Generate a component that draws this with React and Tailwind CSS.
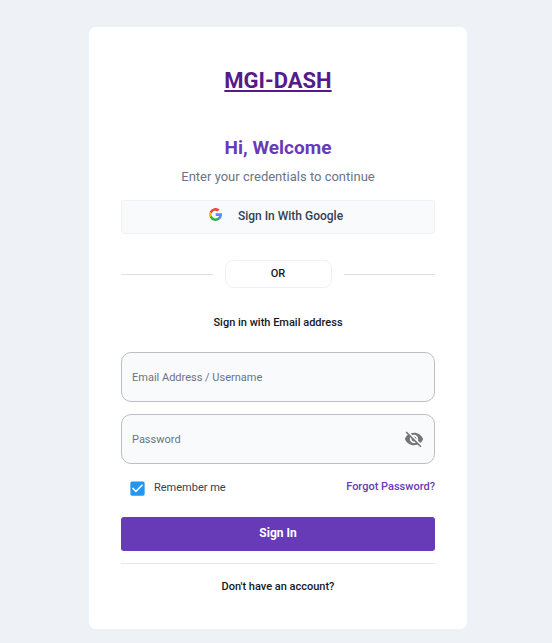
import { useState } from "react";
import { MdCheckBox, MdCheckBoxOutlineBlank, MdVisibility, MdVisibilityOff } from "react-icons/md";

function GoogleLogo() {
  return (
    <svg viewBox="0 0 48 48" className="mb-1 size-[13px]" aria-hidden="true">
      <path fill="#FBBB00" d="M10.6 29 8.9 35.2l-6 .1A23.9 23.9 0 0 1 2.7 13l5.4 1 2.4 5.3a14.3 14.3 0 0 0 .1 9.7z" />
      <path fill="#518EF8" d="M47.6 19.500a24 24 0 0 1-8.600 23.200l-6.800-.3-1-6a14.300 14.300 0 0 0 6.200-7.300H24.700v-9.600h22.900z" />
      <path fill="#28B446" d="M39 42.700A24 24 0 0 1 2.900 35.300l7.700-6.300a14.300 14.300 0 0 0 20.600 7.300l7.800 6.400z" />
      <path fill="#F14336" d="m39.300 5.500-7.800 6.400a14.300 14.300 0 0 0-21 7.400L2.700 13A24 24 0 0 1 39.300 5.500z" />
    </svg>
  );
}

export default function App() {
  const [remember, setRemember] = useState(true);
  const [visible, setVisible] = useState(false);

  return (
    <main className="flex min-h-screen justify-center bg-[#eef2f6] pt-[26px] pb-[13px] pl-1 font-['Roboto',sans-serif] text-[#121926]">
      <section className="flex w-full max-w-[380px] flex-col rounded-lg border border-[#eaf4fc] bg-white px-8 pt-10">
        <a href="#home" className="self-center text-[22px] leading-7 font-bold text-[#551a8b] underline">
          MGI-DASH
        </a>
        <h1 className="mt-[41px] text-center text-[19px] leading-6 font-bold text-[#673ab7]">Hi, Welcome</h1>
        <p className="mt-[7px] text-center text-[13px] leading-5 text-[#697586]">Enter your credentials to continue</p>

        <button
          type="button"
          className="mt-[13px] flex h-[34px] items-center justify-center gap-4 rounded-[3px] border border-[#eef2f6] bg-[#f8fafc] pr-1 pb-0.5 text-xs font-medium text-[#364152]"
        >
          <GoogleLogo />
          Sign In With Google
        </button>

        <div className="mt-[26px] flex items-center gap-3">
          <hr className="grow border-[#e0e0e0]" />
          <span className="w-[107px] rounded-lg border border-[#eef2f6] text-center text-[11px] leading-[26px] font-medium">
            OR
          </span>
          <hr className="grow border-[#e0e0e0]" />
        </div>

        <h2 className="mt-[27px] text-center text-[11px] leading-4 font-medium">Sign in with Email address</h2>

        <form className="mt-[21px] flex flex-col" onSubmit={(event) => event.preventDefault()}>
          <input
            type="text"
            aria-label="Email Address / Username"
            placeholder="Email Address / Username"
            className="h-[50px] rounded-[10px] border border-[#bdbec0] bg-[#f8fafc] px-[10px] text-[11px] placeholder:text-[#697586]"
          />
          <div className="mt-3 flex h-[50px] items-center rounded-[10px] border border-[#bdbec0] bg-[#f8fafc] px-[10px]">
            <input
              type={visible ? "text" : "password"}
              aria-label="Password"
              placeholder="Password"
              className="h-full min-w-0 grow bg-transparent text-[11px] outline-none placeholder:text-[#697586]"
            />
            <button
              type="button"
              aria-label="Toggle password visibility"
              onClick={() => setVisible(!visible)}
              className="text-[#757575]"
            >
              {visible ? <MdVisibility size={20} /> : <MdVisibilityOff size={20} />}
            </button>
          </div>

          <div className="mt-[13px] flex items-start justify-between text-[11px] leading-5">
            <label className="flex items-center gap-[7px] pl-[7px] leading-[22px] text-[#364152]">
              <input
                type="checkbox"
                checked={remember}
                onChange={(event) => setRemember(event.target.checked)}
                className="sr-only"
              />
              <span className="text-[#2196f3]">
                {remember ? <MdCheckBox size={19} /> : <MdCheckBoxOutlineBlank size={19} />}
              </span>
              Remember me
            </label>
            <a href="#forgot" className="font-medium text-[#673ab7]">
              Forgot Password?
            </a>
          </div>

          <button
            type="submit"
            className="mt-[18px] h-[34px] rounded-[3px] bg-[#673ab7] pb-0.5 text-xs font-bold text-white"
          >
            Sign In
          </button>
        </form>

        <hr className="mt-3 border-[#e3e8ef]" />
        <a href="#register" className="mt-[15px] mb-8 self-center text-[11px] leading-4 font-medium">
          Don't have an account?
        </a>
      </section>
    </main>
  );
}
